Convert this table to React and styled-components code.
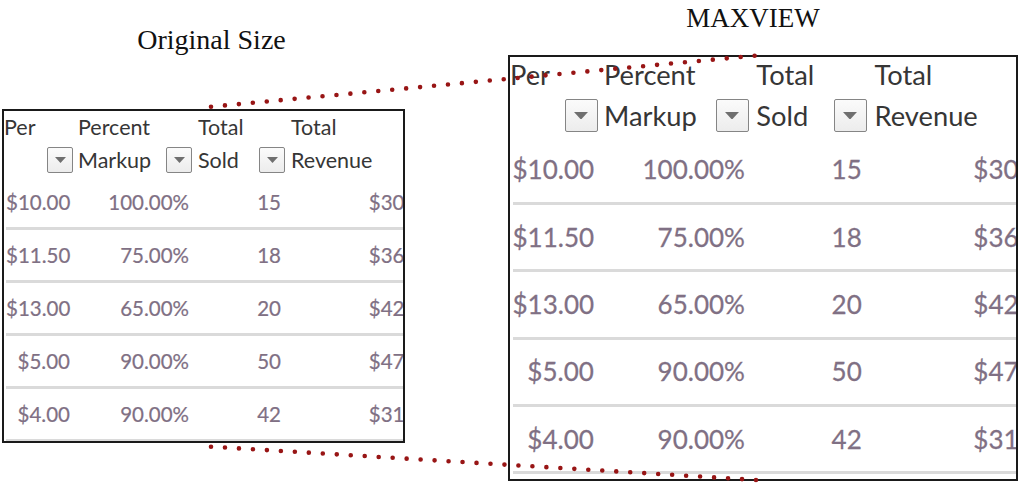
import React from 'react';
import styled, { createGlobalStyle } from 'styled-components';

const headers = [
  { top: 'Per', bottom: '' },
  { top: 'Percent', bottom: 'Markup' },
  { top: 'Total', bottom: 'Sold' },
  { top: 'Total', bottom: 'Revenue' },
];

const rows = [
  ['$10.00', '100.00%', '15', '$300.00'],
  ['$11.50', '75.00%', '18', '$362.25'],
  ['$13.00', '65.00%', '20', '$429.00'],
  ['$5.00', '90.00%', '50', '$475.00'],
  ['$4.00', '90.00%', '42', '$319.20'],
];

const GlobalStyle = createGlobalStyle`
  html, body {
    margin: 0;
    padding: 0;
    background: #fff;
  }
`;

const Page = styled.div`
  position: relative;
  width: 1024px;
  height: 486px;
  overflow: hidden;
  display: flex;
  align-items: flex-start;
  gap: 103px;
  padding-left: 2px;
  box-sizing: border-box;
`;

const Panel = styled.section`
  display: flex;
  flex-direction: column;
  padding-top: ${(p) => p.top}px;
`;

// nudge > 0 pushes the centred title right, < 0 pushes it left
const Title = styled.h2`
  margin: 0 0 ${(p) => p.gap}px;
  padding-left: ${(p) => Math.max(p.nudge, 0) * 2}px;
  padding-right: ${(p) => Math.max(-p.nudge, 0) * 2}px;
  font-family: 'Liberation Serif', 'Times New Roman', serif;
  font-weight: normal;
  font-size: ${(p) => p.size}px;
  line-height: ${(p) => p.lh}px;
  color: #111;
  text-align: center;
`;

const Box = styled.div`
  width: ${(p) => p.w}px;
  height: ${(p) => p.h}px;
  border: 2px solid #1a1a1a;
  overflow: hidden;
  background: #fff;
  font-family: Lato, 'Liberation Sans', sans-serif;
`;

const Sheet = styled.div`
  margin-top: ${(p) => p.shift}px;
  width: ${(p) => 450 * p.s}px;
`;

const HeadRow = styled.div`
  display: grid;
  grid-template-columns: ${(p) => [71, 119, 93, 163].map((v) => v * p.s + 'px').join(' ')};
  height: ${(p) => 66 * p.s}px;
  padding-top: ${(p) => 3 * p.s}px;
  box-sizing: border-box;
`;

const HeadCell = styled.div`
  display: flex;
  flex-direction: column;
  gap: ${(p) => 6.5 * p.s}px;
  padding-left: ${(p) => p.pad * p.s}px;
  padding-right: ${(p) => 2 * p.s}px;
  font-size: ${(p) => 21.5 * p.s}px;
  line-height: ${(p) => 26 * p.s}px;
  color: #363636;
  white-space: nowrap;
`;

const HeadLine = styled.div`
  display: flex;
  align-items: center;
  justify-content: space-between;
  height: ${(p) => 26 * p.s}px;
`;

const FilterButton = styled.span`
  display: flex;
  align-items: center;
  justify-content: center;
  flex: none;
  width: ${(p) => 26 * p.s}px;
  height: ${(p) => 26 * p.s}px;
  box-sizing: border-box;
  border: 1px solid #858585;
  border-radius: 2px;
  background: linear-gradient(#fbfbfb, #ececec);
  svg {
    width: ${(p) => 11 * p.s}px;
    height: ${(p) => 6 * p.s}px;
  }
`;

const DataRow = styled.div`
  display: grid;
  grid-template-columns: ${(p) => [69, 119, 93, 163].map((v) => v * p.s + 'px').join(' ')};
  align-items: center;
  margin-left: ${(p) => 2 * p.s}px;
  height: ${(p) => 53 * p.s}px;
  box-sizing: border-box;
  border-bottom: ${(p) => 3 * p.s}px solid #dadada;
`;

const Cell = styled.div`
  text-align: right;
  padding-right: ${(p) => p.pad * p.s}px;
  font-size: ${(p) => 20.5 * p.s}px;
  line-height: 1.2;
  color: #807084;
  white-space: nowrap;
  font-variant-numeric: tabular-nums;
  -webkit-text-stroke: ${(p) => 0.2 * p.s}px #807084;
`;

const Dots = styled.svg`
  position: absolute;
  left: 0;
  top: 0;
  pointer-events: none;
`;

const cellPads = [5, 5, 6, 5];
const headPads = [0, 3, 4, 4];

function Filter({ s }) {
  return (
    <FilterButton s={s}>
      <svg viewBox="0 0 11 6">
        <path d="M0 0 H11 L5.5 6 Z" fill="#6f6f6f" />
      </svg>
    </FilterButton>
  );
}

function Table({ s, w, h, shift }) {
  return (
    <Box w={w} h={h}>
      <Sheet s={s} shift={shift}>
        <HeadRow s={s}>
          {headers.map((hd, i) => (
            <HeadCell key={i} s={s} pad={headPads[i]}>
              <HeadLine s={s}>{hd.top}</HeadLine>
              <HeadLine s={s}>
                <span>{hd.bottom}</span>
                <Filter s={s} />
              </HeadLine>
            </HeadCell>
          ))}
        </HeadRow>
        {rows.map((r, i) => (
          <DataRow key={i} s={s}>
            {r.map((v, j) => (
              <Cell key={j} s={s} pad={cellPads[j]}>
                {v}
              </Cell>
            ))}
          </DataRow>
        ))}
      </Sheet>
    </Box>
  );
}

export default function App() {
  return (
    <>
      <GlobalStyle />
      <Page>
        <Panel top={24}>
          <Title size={28} lh={32} gap={53} nudge={8}>
            Original Size
          </Title>
          <Table s={1} w={399} h={330} shift={0} />
        </Panel>
        <Panel top={3}>
          <Title size={27} lh={30} gap={22} nudge={-10}>
            MAXVIEW
          </Title>
          <Table s={1.27} w={506} h={422} shift={-3} />
        </Panel>
        <Dots width="1024" height="486" viewBox="0 0 1024 486">
          <g stroke="#981515" strokeWidth="4.6" strokeLinecap="round" strokeDasharray="0 14" fill="none">
            <line x1="211" y1="106.7" x2="757" y2="55.5" />
            <line x1="211" y1="446.7" x2="757" y2="480" />
          </g>
        </Dots>
      </Page>
    </>
  );
}
